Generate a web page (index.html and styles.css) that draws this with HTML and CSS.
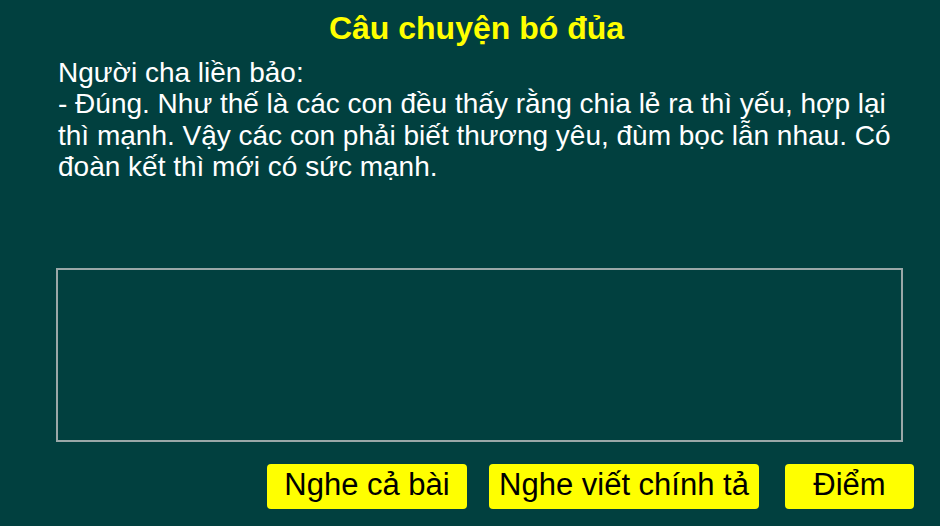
FILE: index.html
```html
<!DOCTYPE html>
<html lang="vi">
<head>
<meta charset="utf-8">
<title>Câu chuyện bó đủa</title>
<link rel="stylesheet" href="styles.css">
</head>
<body>
<div class="page">
  <h1 class="title">Câu chuyện bó đủa</h1>
  <p class="story">Người cha liền bảo:<br>- Đúng. Như thế là các con đều thấy rằng chia lẻ ra thì yếu, hợp lại thì mạnh. Vậy các con phải biết thương yêu, đùm bọc lẫn nhau. Có đoàn kết thì mới có sức mạnh.</p>
  <div class="answer"></div>
  <div class="actions">
    <button class="btn btn-all">Nghe cả bài</button>
    <button class="btn btn-dict">Nghe viết chính tả</button>
    <button class="btn btn-score">Điểm</button>
  </div>
</div>
</body>
</html>
```
FILE: styles.css
```css
html, body {
  margin: 0;
  padding: 0;
  background: #01403f;
  width: 940px;
  height: 526px;
  overflow: hidden;
}
.page {
  font-family: "Liberation Sans", Arial, sans-serif;
  padding-left: 56px;
  width: 847px;
  display: flex;
  flex-direction: column;
}
.title {
  margin: 10px 6px 0 0;
  font-size: 32px;
  line-height: 37px;
  font-weight: bold;
  color: #ffff00;
  text-align: center;
}
.story {
  margin: 10px 0 0 0;
  padding-left: 2px;
  font-size: 28px;
  line-height: 31.3px;
  color: #ffffff;
  height: 128px;
}
.answer {
  margin-top: 83px;
  height: 170px;
  border: 2px solid #9aa8a8;
}
.actions {
  margin-top: 22px;
  display: flex;
  width: 858px;
}
.btn {
  font-family: "Liberation Sans", Arial, sans-serif;
  font-size: 31px;
  color: #000;
  background: #ffff00;
  border: none;
  border-radius: 4px;
  height: 45px;
  padding: 0 0 3px 0;
  line-height: 40px;
}
.btn-all {
  margin-left: 211px;
  width: 200px;
}
.btn-dict {
  margin-left: 22px;
  width: 270px;
}
.btn-score {
  margin-left: 26px;
  width: 129px;
}
```
